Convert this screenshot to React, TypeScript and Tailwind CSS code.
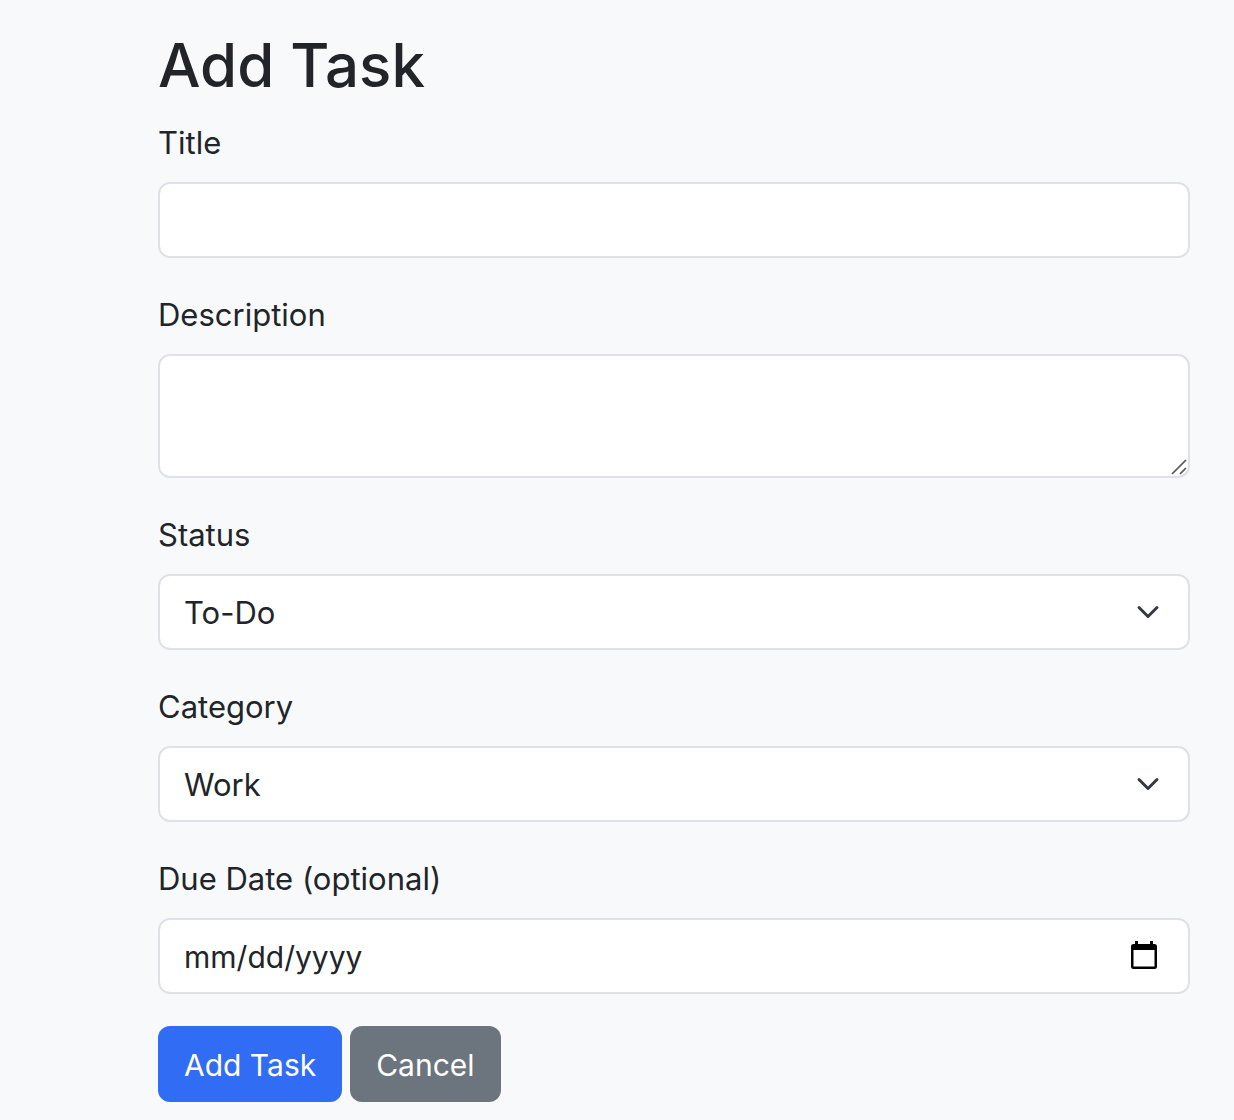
import { useState } from "react";

const control =
  "block w-full rounded-xl border-2 border-[#dee2e6] bg-white px-6 pt-0.5 text-[31px] leading-[48px] text-[#212529] outline-none focus:border-[#86b7fe]";
const label = "mb-3.5 block text-[31px] leading-[50px]";
const button = "h-[76px] rounded-xl px-[26px] pt-0.5 text-[30px] leading-[48px] text-white";

function Chevron() {
  return (
    <svg aria-hidden="true" viewBox="0 0 16 16" fill="none" className="pointer-events-none absolute top-1/2 right-[30px] size-6 -translate-y-1/2">
      <path d="m2 5 6 6 6-6" stroke="#343a40" strokeWidth="2" strokeLinecap="round" strokeLinejoin="round" />
    </svg>
  );
}

function SelectField({ id, text, options }: { id: string; text: string; options: string[] }) {
  return (
    <div className="mb-8">
      <label htmlFor={id} className={label}>{text}</label>
      <div className="relative">
        <select id={id} className={`${control} h-[76px] appearance-none`}>
          {options.map((o) => (
            <option key={o}>{o}</option>
          ))}
        </select>
        <Chevron />
      </div>
    </div>
  );
}

export default function App() {
  const [date, setDate] = useState("");
  return (
    <main className="min-h-screen bg-[#f8f9fa] pt-6 pr-11 pb-4 pl-[158px] font-['Inter',sans-serif] text-[#212529]">
      <h1 className="mb-3.5 pt-0.5 text-[60px] leading-[78px] font-medium">Add Task</h1>
      <form onSubmit={(e) => e.preventDefault()}>
        <div className="mb-8">
          <label htmlFor="title" className={label}>Title</label>
          <input id="title" type="text" className={`${control} h-[76px]`} />
        </div>
        <div className="mb-8">
          <label htmlFor="description" className={label}>Description</label>
          <div className="relative">
            <textarea id="description" className={`${control} h-[124px] resize-none py-3`} />
            <svg aria-hidden="true" viewBox="0 0 16 16" fill="none" className="pointer-events-none absolute right-[3px] bottom-[3px] size-4">
              <path d="M1 15 15 1M9 15l6-6" stroke="#555" strokeWidth="1.7" />
            </svg>
          </div>
        </div>
        <SelectField id="status" text="Status" options={["To-Do", "In Progress", "Done"]} />
        <SelectField id="category" text="Category" options={["Work", "Personal"]} />
        <div className="mb-8">
          <label htmlFor="due" className={label}>Due Date (optional)</label>
          <div className="relative">
            <input
              id="due"
              type="date"
              value={date}
              onChange={(e) => setDate(e.target.value)}
              className={`${control} h-[76px] [&::-webkit-calendar-picker-indicator]:opacity-0 [&::-webkit-datetime-edit]:p-0 [&::-webkit-datetime-edit]:text-[30px] [&::-webkit-datetime-edit-fields-wrapper]:p-0 [&::-webkit-datetime-edit-month-field]:p-0 [&::-webkit-datetime-edit-day-field]:p-0 [&::-webkit-datetime-edit-year-field]:p-0`}
            />
            <svg aria-hidden="true" viewBox="0 0 26 28" className="pointer-events-none absolute top-[23px] right-[33px] h-7 w-[26px]">
              <path fillRule="evenodd" d="M4 0h3v3h12V0h3v3h1.500q2.500 0 2.500 2.500v20q0 2.500-2.500 2.500h-21Q0 28 0 25.500v-20Q0 3 2.500 3H4zM2.500 9v16.500h21V9z" fill="#000" />
            </svg>
          </div>
        </div>
        <div className="flex gap-2">
          <button type="submit" className={`${button} bg-[#316cf4]`}>Add Task</button>
          <button type="button" className={`${button} bg-[#6c757d]`}>Cancel</button>
        </div>
      </form>
    </main>
  );
}
